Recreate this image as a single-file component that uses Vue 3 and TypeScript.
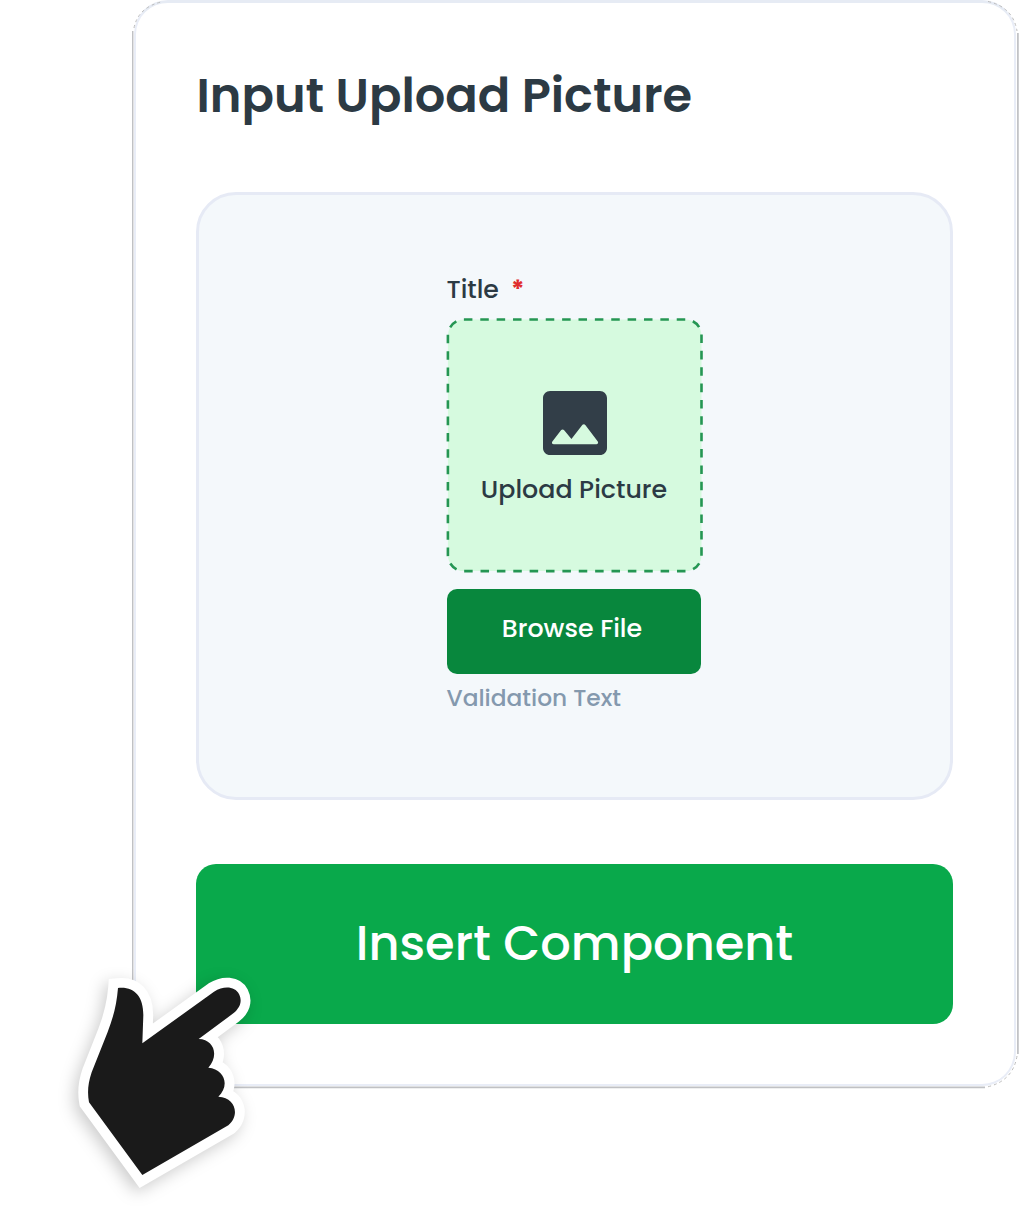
<script setup lang="ts">
interface Props {
  heading?: string
  label?: string
  hint?: string
}

withDefaults(defineProps<Props>(), {
  heading: 'Input Upload Picture',
  label: 'Title',
  hint: 'Validation Text',
})
</script>

<template>
  <main class="page">
    <section class="card">
      <svg class="fringe" width="888" height="1090" viewBox="0 0 888 1090" fill="none" aria-hidden="true">
        <path d="M.6 31V1090M885.9 33V1054M853 1087.4H32" stroke="#c0c1c4" stroke-width="1.7" />
        <path d="M2 28Q6 7 31 1.5M856 1.5Q881 7 885 31M885 1056Q881 1081 855 1087" stroke="#bcbcbc" stroke-dasharray="3 3" />
      </svg>
      <h1 class="heading"><span>{{ heading }}</span></h1>
      <div class="preview">
        <div class="field">
          <label class="label"><span>{{ label }}</span><span class="required">*</span></label>
          <div class="drop">
            <svg class="outline" width="257" height="256" viewBox="0 0 257 256" aria-hidden="true">
              <rect x=".9" y="1.5" width="253.6" height="251.6" rx="16" fill="#d6fadf" stroke="#259653" stroke-width="2.6" pathLength="120" stroke-dasharray="1.04 .96" />
            </svg>
            <svg class="image" width="64" height="64" viewBox="3 3 18 18" fill="#323e48" aria-hidden="true">
              <path d="M21 19V5c0-1.1-.9-2-2-2H5c-1.1 0-2 .9-2 2v14c0 1.1.9 2 2 2h14c1.1 0 2-.9 2-2zM8.9 13.98l2.1 2.53 3.1-3.99c.2-.26.6-.26.8.01l3.51 4.68c.25.33.01.8-.4.8H6.02c-.42 0-.65-.48-.39-.81L8.12 14c.19-.26.57-.27.78-.02z" />
            </svg>
            <span class="drop-text">Upload Picture</span>
          </div>
          <button class="browse" type="button"><span>Browse File</span></button>
          <p class="hint"><span>{{ hint }}</span></p>
        </div>
      </div>
      <button class="insert" type="button"><span>Insert Component</span></button>
    </section>
    <svg class="pointer" width="210" height="240" viewBox="0 0 630 720" aria-hidden="true">
      <path class="halo" d="M174 84C222 79 250 108 250 165L247 250L462 95C492 76 525 79 537 102C548 124 540 144 520 160L416 237C462 238 478 286 445 323C493 327 511 376 475 410C528 413 540 467 505 496L247 645L87 427C82 400 83 372 95 337L143 216C160 171 170 134 174 84Z" />
      <path class="hand" d="M174 84C222 79 250 108 250 165L247 250L462 95C492 76 525 79 537 102C548 124 540 144 520 160L416 237C462 238 478 286 445 323C493 327 511 376 475 410C528 413 540 467 505 496L247 645L87 427C82 400 83 372 95 337L143 216C160 171 170 134 174 84Z" />
    </svg>
  </main>
</template>

<style>
body {
  margin: 0;
  background: #fff;
}
</style>

<style scoped>
.page {
  position: relative;
  box-sizing: border-box;
  width: 1024px;
  height: 1228px;
  padding-left: 134px;
  overflow: hidden;
  background: #fff;
  color: #2c3a44;
  font-family: Poppins, Inter, sans-serif;
}

.card {
  position: relative;
  box-sizing: border-box;
  width: 882px;
  height: 1086px;
  padding: 0 60px;
  border: 2px solid #e9edf7;
  border-top: 3px solid #e6ebf4;
  border-radius: 34px;
}

.fringe {
  position: absolute;
  top: -3px;
  left: -4px;
}

.heading {
  height: 189px;
  margin: 0;
  padding-top: 65px;
  padding-left: 0.5px;
  box-sizing: border-box;
  font-size: 47.9px;
  font-weight: 600;
  line-height: 56px;
  white-space: nowrap;
}

.preview {
  box-sizing: border-box;
  display: flex;
  justify-content: center;
  width: 757px;
  height: 608px;
  padding-top: 78px;
  border: 3px solid #e6eaf5;
  border-radius: 40px;
  background: #f4f8fb;
}

.field {
  width: 256px;
}

.label {
  display: flex;
  gap: 12px;
  height: 45px;
  font-size: 25.2px;
  font-weight: 500;
  line-height: 33px;
}

.required {
  color: #e02d2d;
  font-weight: 700;
}

.drop {
  position: relative;
  display: flex;
  flex-direction: column;
  align-items: center;
  box-sizing: border-box;
  height: 270.5px;
  padding-top: 73px;
  padding-right: 1px;
}

.outline {
  position: absolute;
  top: 0;
  left: 0;
  overflow: visible;
}

.image {
  position: relative;
  margin-left: 1px;
}

.drop-text {
  position: relative;
  margin-top: 17px;
  font-size: 25.3px;
  font-weight: 500;
  line-height: 34px;
  white-space: nowrap;
}

button {
  display: flex;
  justify-content: center;
  padding: 0;
  border: 0;
  color: #fff;
  font: inherit;
  font-weight: 500;
}

.browse {
  width: 254px;
  height: 85px;
  padding-top: 22px;
  border-radius: 10px;
  background: #08873d;
  font-size: 25.3px;
  line-height: 34px;
}

.browse span {
  margin-right: 3px;
}

.hint {
  margin: 7.5px 0 0;
  color: #8499ae;
  font-size: 23.3px;
  font-weight: 500;
  line-height: 34px;
}

.insert {
  width: 757px;
  height: 160px;
  margin-top: 64px;
  padding-top: 52px;
  border-radius: 20px;
  background: #09a94b;
  font-size: 47.9px;
  line-height: 56px;
}

.pointer {
  position: absolute;
  top: 960px;
  left: 60px;
  overflow: visible;
}

.halo {
  fill: #fff;
  stroke: #fff;
  stroke-width: 59px;
  stroke-linejoin: miter;
  filter: drop-shadow(-12px 14px 24px rgba(0, 0, 0, 0.2));
}

.hand {
  fill: #1a1a1a;
}
</style>
